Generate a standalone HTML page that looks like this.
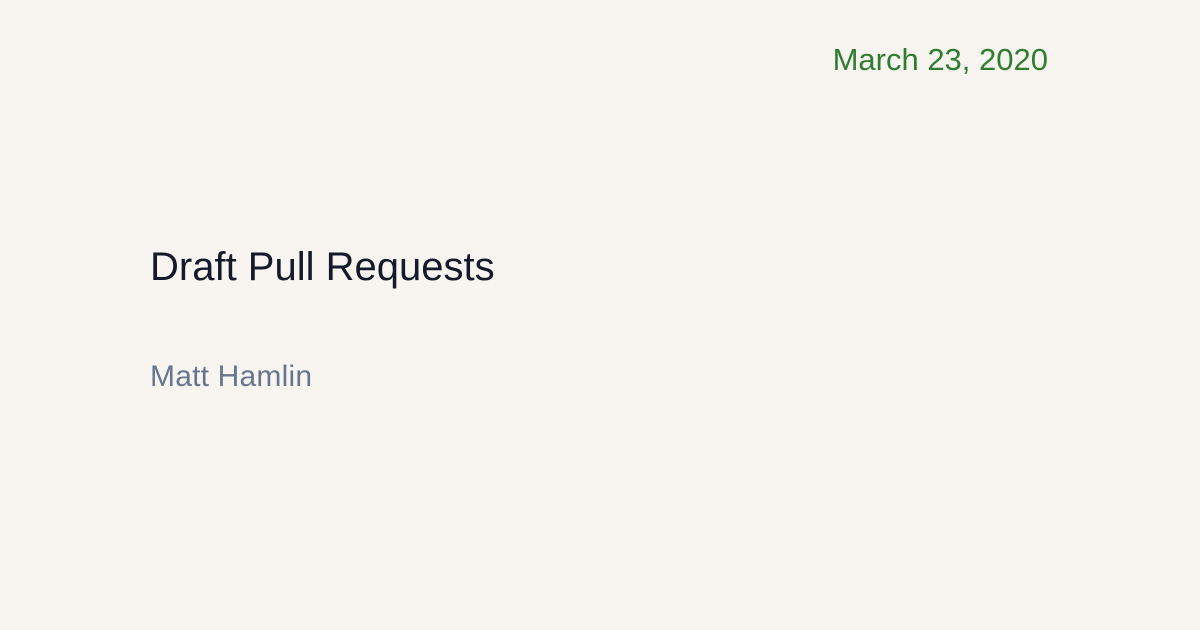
<!DOCTYPE html>
<html><head><meta charset="utf-8"><style>
html,body{margin:0;padding:0}
body{width:1200px;height:630px;background:#f8f4ef;position:relative;overflow:hidden;font-family:"Liberation Sans",sans-serif}
.d{position:absolute;right:152px;top:42px;font-size:31px;color:#2f7d32;white-space:nowrap;line-height:36px}
.t{position:absolute;left:150px;top:244px;font-size:40px;color:#141a2b;white-space:nowrap;line-height:46px}
.a{position:absolute;left:150px;top:360px;font-size:30px;color:#66768f;letter-spacing:0.2px;white-space:nowrap;line-height:34px}
</style></head><body>
<div class="d">March 23, 2020</div>
<div class="t">Draft Pull Requests</div>
<div class="a">Matt Hamlin</div>
</body></html>
